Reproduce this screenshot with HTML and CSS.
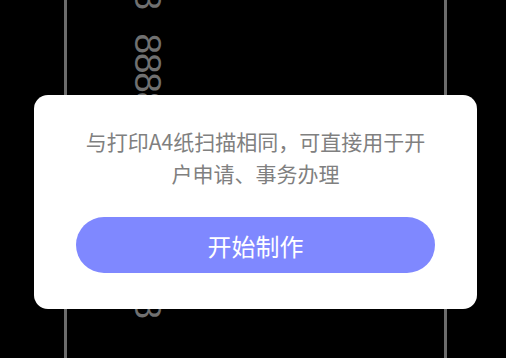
FILE: index.html
```html
<!DOCTYPE html>
<html lang="zh-CN">
<head>
<meta charset="utf-8">
<title>开始制作</title>
<link rel="stylesheet" href="styles.css">
</head>
<body>
<div class="page">
  <div class="digits">
    <div class="digits-line"><span class="d first">8</span><span class="d">8</span><span class="d">8</span><span class="d">8</span><span class="d">8</span><span class="d">8</span><span class="d last">8</span></div>
  </div>
</div>
<div class="dialog">
  <p class="dialog-text">与打印A4纸扫描相同，可直接用于开户申请、事务办理</p>
  <div class="dialog-btn">开始制作</div>
</div>
</body>
</html>
```

FILE: styles.css
```css
html, body {
  margin: 0;
  padding: 0;
  background: #000;
  width: 506px;
  height: 358px;
  overflow: hidden;
  position: relative;
}

.page {
  margin-left: 64px;
  width: 377px;
  height: 358px;
  border-left: 3px solid #6c6c6c;
  border-right: 3px solid #6c6c6c;
  overflow: hidden;
}

.digits {
  margin-left: 67px;
  width: 27px;
  height: 358px;
}

.digits-line {
  white-space: nowrap;
  font-family: "Liberation Sans", Arial, sans-serif;
  font-size: 37px;
  line-height: 37px;
  color: #707070;
  transform-origin: 0 0;
  transform: translate(31.6px, 0) rotate(90deg);
  width: 400px;
}

.d {
  display: inline-block;
  width: 19.4px;
}

.d.first {
  margin-left: -10.5px;
  margin-right: 24.6px;
}

.d.last {
  margin-left: 168px;
}

.dialog {
  position: absolute;
  left: 34px;
  top: 95px;
  width: 443px;
  box-sizing: border-box;
  height: 214px;
  background: #fff;
  border-radius: 14px;
  padding: 30px 42px 36px;
  font-family: "Noto Sans CJK SC", "Noto Sans", sans-serif;
}

.dialog-text {
  margin: 0;
  font-size: 21px;
  line-height: 32px;
  color: #808080;
  text-align: center;
}

.dialog-btn {
  margin-top: 28px;
  height: 56px;
  border-radius: 28px;
  background: #7f88ff;
  color: #fff;
  font-size: 24px;
  display: flex;
  align-items: center;
  justify-content: center;
}
```
